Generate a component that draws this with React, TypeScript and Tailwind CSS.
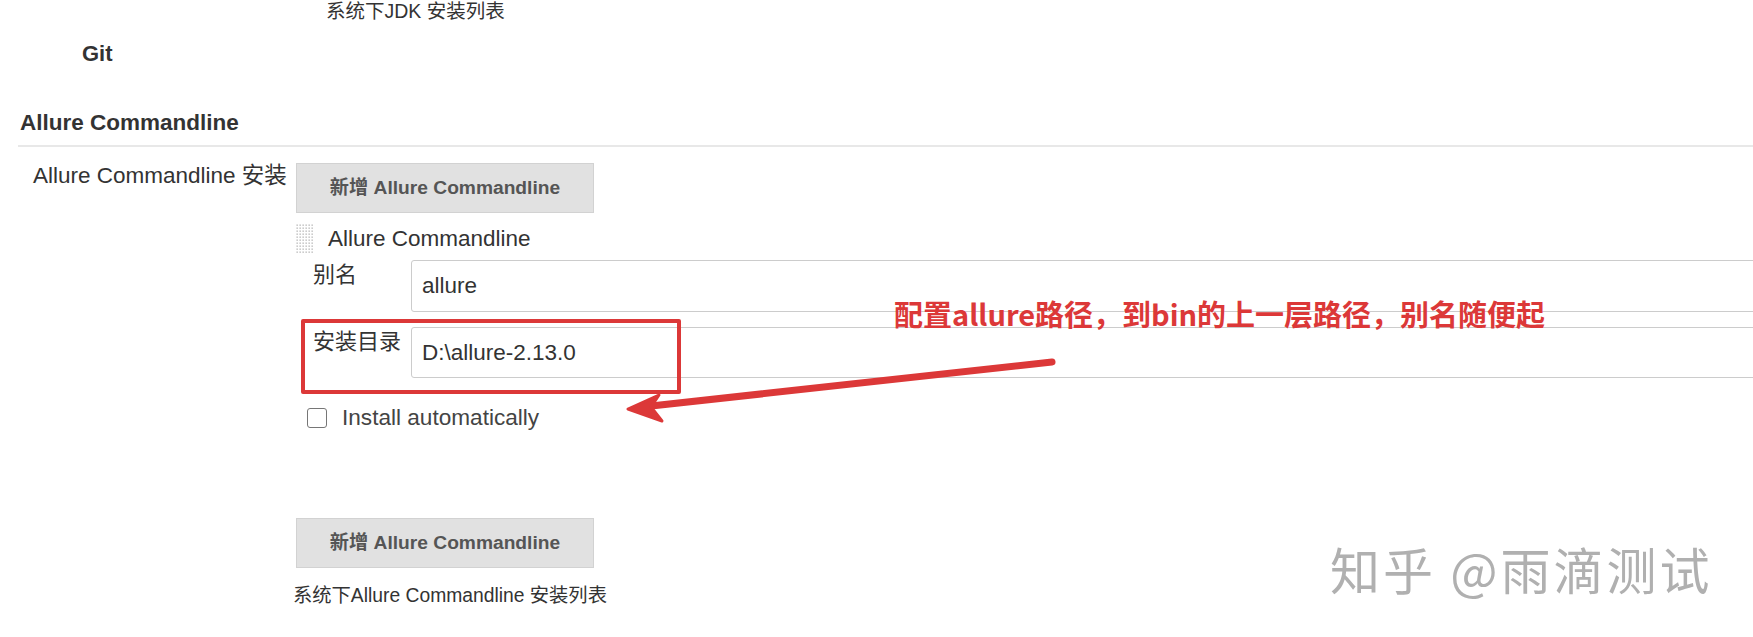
import React from 'react';

function DragHandle() {
    return (
        <svg width="18" height="30" viewBox="0 0 18 30" className="shrink-0">
            <defs>
                <pattern id="dots" width="3" height="3" patternUnits="userSpaceOnUse">
                    <rect x="0.5" y="0.5" width="1.3" height="1.3" fill="#b0b0b0" />
                </pattern>
            </defs>
            <rect width="18" height="30" fill="url(#dots)" />
        </svg>
    );
}

function AddButton() {
    return (
        <button className="flex h-[50px] w-[298px] items-center justify-center border border-[#d2d2d2] bg-[#e1e1e1] text-[19.2px] font-bold text-[#555]">
            新增 Allure Commandline
        </button>
    );
}

export default function App() {
    return (
        <div
            className="relative h-[637px] w-[1753px] overflow-hidden bg-white text-[#333]"
            style={{ fontFamily: '"Liberation Sans", "Noto Sans CJK SC", sans-serif' }}
        >
            {/* JDK list hint */}
            <div className="pl-[326px] text-[19.5px] leading-[22px]">系统下JDK 安装列表</div>

            <div className="mt-[20px] pl-[82px] text-[22px] font-bold leading-[24px]">Git</div>

            {/* Section header */}
            <div className="mt-[45px] ml-[18px] border-b-2 border-[#e8e8e8] pb-[10px] pl-[2px] text-[22.5px] font-bold leading-[24px]">
                Allure Commandline
            </div>

            <div className="mt-[16px] flex">
                <div className="w-[296px] shrink-0 pl-[33px] pt-[1px] text-[22.5px] leading-[24px]">Allure Commandline 安装</div>

                <div className="w-[1600px] shrink-0">
                    <AddButton />

                    <div className="mt-[11px] flex h-[30px] items-center">
                        <DragHandle />
                        <span className="ml-[14px] text-[22.5px] leading-[24px]">Allure Commandline</span>
                    </div>

                    <div className="mt-[6px] flex">
                        <div className="w-[115px] shrink-0 pl-[17px] pt-[3px] text-[22px] leading-[24px]">别名</div>
                        <div className="flex h-[52px] flex-1 items-center rounded-[3px] border border-[#cccccc] pl-[10px] text-[22.5px]">
                            allure
                        </div>
                    </div>

                    <div className="mt-[15px] flex">
                        <div className="w-[115px] shrink-0 pl-[17px] pt-[3px] text-[22px] leading-[24px]">安装目录</div>
                        <div className="flex h-[51px] flex-1 items-center rounded-[3px] border border-[#cccccc] pl-[10px] text-[22.5px]">
                            D:\allure-2.13.0
                        </div>
                    </div>

                    <div className="mt-[28px] flex items-center pl-[11px]">
                        <span className="h-[20px] w-[20px] shrink-0 rounded-[3px] border-[1.5px] border-[#767676] bg-white" />
                        <span className="ml-[15px] text-[22.6px] leading-[24px] text-[#444]">Install automatically</span>
                    </div>

                    <div className="mt-[88px]">
                        <AddButton />
                    </div>
                    <div className="mt-[17px] -ml-[3px] text-[19.3px] leading-[22px]">系统下Allure Commandline 安装列表</div>
                </div>
            </div>

            {/* Annotation overlay */}
            <div className="absolute left-[301px] top-[319px] h-[75px] w-[380px] rounded-[2px] border-4 border-[#dc3838]" />
            <svg className="absolute left-0 top-0" width="1753" height="637">
                <line x1="1052" y1="362" x2="642" y2="407" stroke="#dc3838" strokeWidth="7" strokeLinecap="round" />
                <path d="M628 409 L659 395 L651 407 L662 421 Z" fill="#dc3838" stroke="#dc3838" strokeWidth="3" strokeLinejoin="round" />
            </svg>
            <div
                className="absolute left-[894px] top-[296px] text-[29px] font-bold leading-[34px] text-[#dc3838]"
                style={{ fontFamily: '"Noto Sans CJK SC", sans-serif' }}
            >
                配置allure路径，到bin的上一层路径，别名随便起
            </div>

            {/* Watermark */}
            <div
                className="absolute left-[1330px] top-[538px] text-[50px] leading-[60px] tracking-[3px] text-[#b0b0b0] [text-shadow:1px_1px_0_#ffffff,-1px_-1px_0_#ffffff]"
                style={{ fontFamily: '"Noto Sans CJK SC", sans-serif' }}
            >
                知乎 @雨滴测试
            </div>
        </div>
    );
}
